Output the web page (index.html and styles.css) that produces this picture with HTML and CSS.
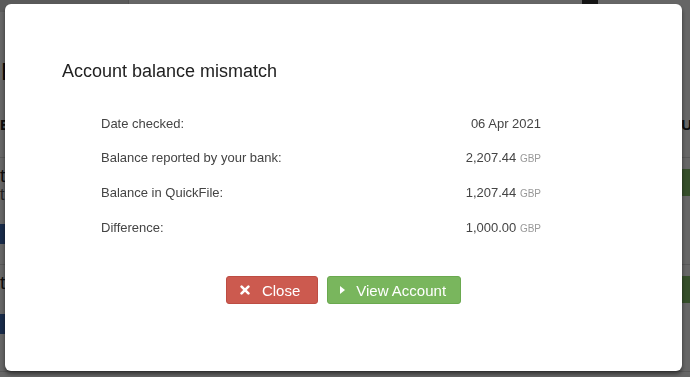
FILE: index.html
```html
<!DOCTYPE html>
<html lang="en">
<head>
    <meta charset="UTF-8">
    <meta name="viewport" content="width=device-width, initial-scale=1.0">
    <title>Account balance mismatch</title>
    <link rel="stylesheet" href="styles.css">
</head>
<body>
    <!-- page behind the dialog -->
    <div class="page">
        <div class="topbar">
            <div class="tab"></div>
            <div class="topbar-fill"></div>
            <div class="nav-icon"></div>
        </div>
        <h2 class="page-title">B</h2>
        <div class="table-head">
            <span>E</span>
            <span class="th-right">Ur</span>
        </div>
        <div class="bank-row">
            <div class="cell-main">
                <div class="row-name">t</div>
                <div class="row-sub">t</div>
                <span class="tag">C</span>
            </div>
            <div class="cell-action"><span class="btn-go"></span></div>
        </div>
        <div class="bank-row">
            <div class="cell-main">
                <div class="row-name">t</div>
                <span class="tag">C</span>
            </div>
            <div class="cell-action"><span class="btn-go"></span></div>
        </div>
    </div>

    <div class="backdrop">
        <div class="modal">
            <h3 class="modal-title">Account balance mismatch</h3>
            <div class="details">
                <div class="detail-row">
                    <span>Date checked:</span>
                    <span>06 Apr 2021</span>
                </div>
                <div class="detail-row">
                    <span>Balance reported by your bank:</span>
                    <span>2,207.44 <span class="currency">GBP</span></span>
                </div>
                <div class="detail-row">
                    <span>Balance in QuickFile:</span>
                    <span>1,207.44 <span class="currency">GBP</span></span>
                </div>
                <div class="detail-row">
                    <span>Difference:</span>
                    <span>1,000.00 <span class="currency">GBP</span></span>
                </div>
            </div>
            <div class="actions">
                <button class="btn btn-close">
                    <svg class="icon-x" width="10" height="10" viewBox="0 0 10 10">
                        <path d="M1.6 1.6 L8.4 8.4 M8.4 1.6 L1.6 8.4" stroke="#fff" stroke-width="2.6" stroke-linecap="round"/>
                    </svg>
                    Close
                </button>
                <button class="btn btn-view">
                    <svg class="icon-play" width="5" height="8" viewBox="0 0 5 8">
                        <polygon points="0,0 5,4 0,8" fill="#fff"/>
                    </svg>
                    View Account
                </button>
            </div>
        </div>
    </div>
</body>
</html>
```

FILE: styles.css
```css
body {
    font-family: "Liberation Sans", Arial, sans-serif;
    margin: 0;
    padding: 0;
    background-color: #fff;
    overflow: hidden;
}

/* background page */
.page {
    height: 377px;
    color: #222;
}

.topbar {
    display: flex;
    height: 12px;
    background-color: #fff;
}

.tab {
    width: 128px;
    background-color: #e2e2e2;
    border-right: 1px solid #ccc;
}

.topbar-fill {
    flex: 1;
}

.nav-icon {
    width: 16px;
    height: 12px;
    margin-right: 92px;
    border-radius: 0 0 6px 6px;
    background-color: #333;
}

.page-title {
    margin: 46px 0 0 1px;
    font-size: 24px;
    font-weight: normal;
    color: #111;
}

.table-head {
    display: flex;
    justify-content: space-between;
    margin-top: 24px;
    height: 47px;
    font-size: 15px;
    font-weight: bold;
    border-bottom: 1px solid #ddd;
}

.table-head span {
    padding-top: 6px;
}

.table-head .th-right {
    margin-right: -8px;
}

.bank-row {
    display: flex;
    justify-content: space-between;
    height: 106px;
    border-bottom: 1px solid #ddd;
}

.cell-main {
    padding: 8px 0 0 0;
}

.row-name {
    font-size: 19px;
    line-height: 20px;
}

.row-sub {
    font-size: 16px;
    line-height: 18px;
    color: #555;
}

.tag {
    display: inline-block;
    margin-top: 20px;
    padding: 2px 6px;
    font-size: 12px;
    line-height: 16px;
    color: #fff;
    background-color: #3f6db8;
}

.bank-row:last-child .tag {
    margin-top: 21px;
}

.cell-action {
    padding-top: 11px;
}

.btn-go {
    display: block;
    width: 60px;
    height: 27px;
    margin-right: -40px;
    background-color: #85c469;
}

/* dialog */
.backdrop {
    position: fixed;
    top: 0;
    left: 0;
    right: 0;
    bottom: 0;
    background-color: rgba(0, 0, 0, 0.6);
    padding: 4px 0 0 5px;
}

.modal {
    width: 677px;
    height: 367px;
    box-sizing: border-box;
    padding: 57px 57px 0;
    background-color: #fff;
    border-radius: 6px;
    box-shadow: 0 3px 4px rgba(0, 0, 0, 0.5);
}

.modal-title {
    margin: 0 0 26px;
    font-size: 18px;
    line-height: 20px;
    font-weight: normal;
    color: #222;
}

.details {
    margin-left: 39px;
    width: 440px;
}

.detail-row {
    display: flex;
    justify-content: space-between;
    font-size: 13px;
    line-height: 34px;
    color: #444;
}

.currency {
    font-size: 10px;
    color: #999;
}

.actions {
    display: flex;
    justify-content: center;
    gap: 9px;
    margin-top: 30px;
}

.btn {
    display: flex;
    align-items: center;
    height: 28px;
    border-radius: 3px;
    font-family: inherit;
    font-size: 15px;
    color: #fff;
    cursor: pointer;
}

.btn-close {
    padding: 0 17px 0 13px;
    background-color: #cc5a4f;
    border: 1px solid #bd4d43;
}

.btn-close .icon-x {
    margin-right: 12px;
}

.btn-view {
    padding: 0 14px 0 12px;
    background-color: #79b65d;
    border: 1px solid #6aa94f;
}

.btn-view .icon-play {
    margin-right: 11px;
}
```
